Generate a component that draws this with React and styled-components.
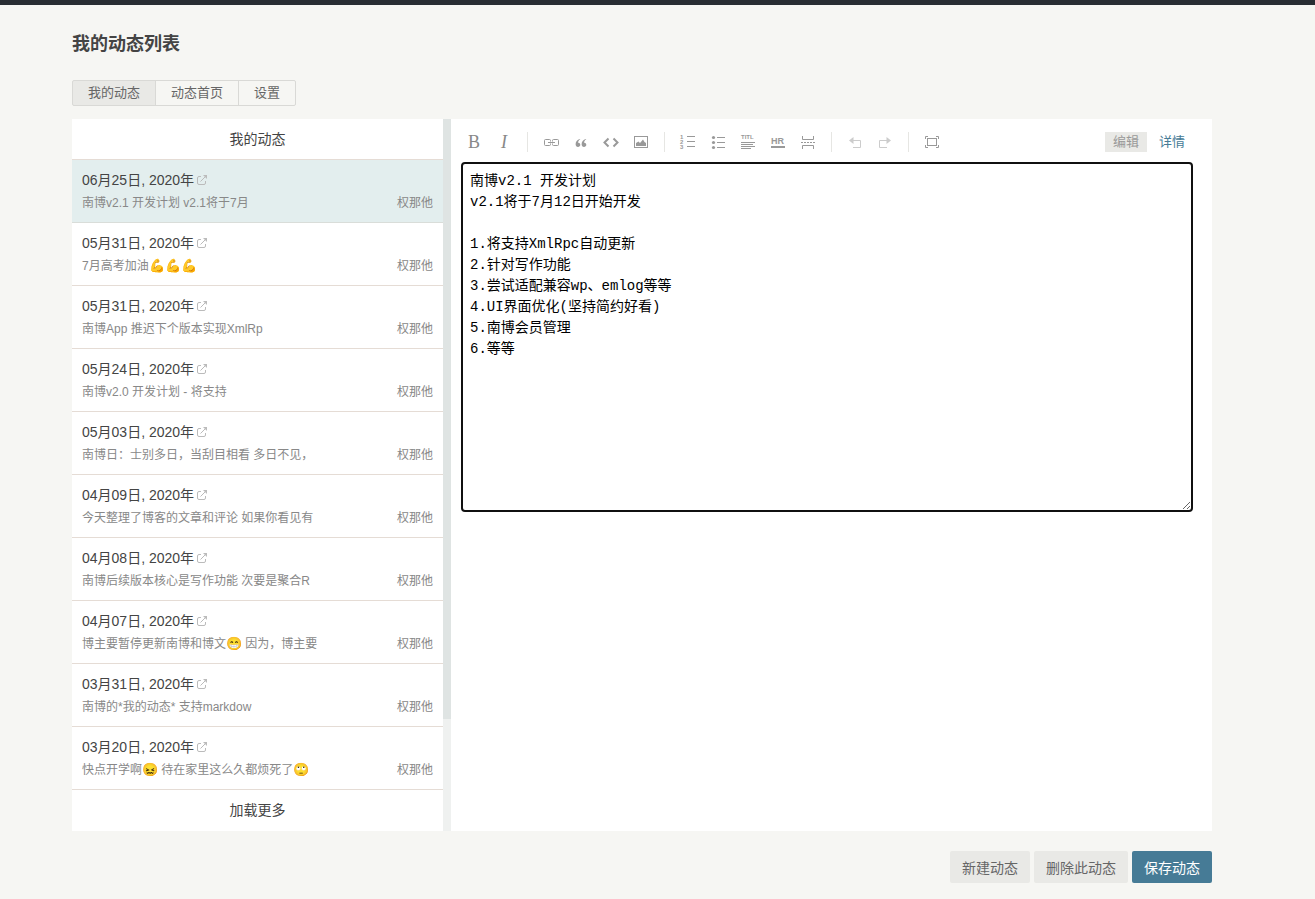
import React, { useState } from "react";
import styled, { createGlobalStyle } from "styled-components";

const GlobalStyle = createGlobalStyle`
  *, *::before, *::after { box-sizing: border-box; }
  body {
    margin: 0;
    background: #f6f6f3;
    color: #444;
    font-family: "Liberation Sans", "Noto Sans CJK SC", sans-serif;
    font-size: 14px;
    line-height: 20px;
  }
  button, textarea { font: inherit; margin: 0; }
  button { cursor: pointer; }
`;

const TopBar = styled.div`
  height: 5px;
  background: #292d33;
`;

const Page = styled.main`
  padding: 27px 103px 16px 72px;
`;

const Title = styled.h2`
  margin: 0 0 24px;
  font-size: 18px;
  line-height: 24px;
  font-weight: 700;
`;

const TabList = styled.nav`
  display: flex;
  margin-bottom: 13px;
`;

const TabLink = styled.a`
  height: 26px;
  padding: 0 15px;
  border: 1px solid #d9d9d6;
  background: ${(p) => (p.$active ? "#e9e9e6" : "transparent")};
  color: #666;
  font-size: 13px;
  line-height: 24px;
  text-decoration: none;
  & + & { margin-left: -1px; }
  &:first-child { border-radius: 2px 0 0 2px; }
  &:last-child { border-radius: 0 2px 2px 0; }
`;

const Board = styled.section`
  display: grid;
  grid-template-columns: 379px 1fr;
  background: #fff;
`;

const Sidebar = styled.div`
  display: flex;
`;

const ListColumn = styled.div`
  flex: 1;
  min-width: 0;
`;

const ListHeading = styled.h3`
  margin: 0;
  padding: 10px;
  border-bottom: 1px solid #e5dcd5;
  font-size: 14px;
  font-weight: 400;
  text-align: center;
`;

const List = styled.ul`
  list-style: none;
  margin: 0;
  padding: 0;
`;

const Item = styled.li`
  padding: 10px 10px 8px;
  border-bottom: 1px solid ${(p) => (p.$active ? "#d9ddd9" : "#e5dcd5")};
  background: ${(p) => (p.$active ? "#e3eeee" : "#fff")};
`;

const ItemHead = styled.div`
  display: flex;
  align-items: center;
  gap: 3px;
  margin-bottom: 2px;
  line-height: 20px;
`;

const ItemLink = styled.a`
  display: flex;
  color: #bbb;
`;

const ItemBody = styled.div`
  display: flex;
  justify-content: space-between;
  height: 22px;
  color: #888;
  font-size: 12px;
  line-height: 22px;
  white-space: nowrap;
`;

const Emoji = styled.span`
  font-size: 13px;
  line-height: 1;
`;

const MoreButton = styled.button`
  display: block;
  width: 100%;
  padding: 10px;
  border: 0;
  background: none;
  color: #444;
  line-height: 21px;
`;

const ScrollTrack = styled.div`
  width: 8px;
  background: #eff1f0;
`;

const ScrollThumb = styled.div`
  height: calc(100% - 112px);
  background: #dfe4e3;
`;

const Editor = styled.div`
  padding: 13px 19px 13px 10px;
`;

const ToolRow = styled.div`
  display: flex;
  justify-content: space-between;
  margin-bottom: 10px;
`;

const Tools = styled.div`
  display: flex;
  padding-left: 3px;
`;

const ToolGroup = styled.div`
  display: flex;
  gap: 10px;
  & + & {
    margin-left: 13px;
    padding-left: 13px;
    border-left: 1px solid #e6e6e3;
  }
`;

const ToolButton = styled.button`
  width: 20px;
  height: 20px;
  padding: 0;
  border: 0;
  background: none;
  color: ${(p) => (p.$muted ? "#ccc" : "#999")};
  svg { display: block; }
`;

const LetterButton = styled(ToolButton)`
  color: #888;
  font: ${(p) => (p.$italic ? "italic 400" : "400")} 18px/20px "Liberation Serif", serif;
`;

const Modes = styled.div`
  display: flex;
  gap: 4px;
`;

const ModeButton = styled.button`
  height: 20px;
  padding: 0 8px;
  border: 0;
  background: ${(p) => (p.$active ? "#e9e9e6" : "transparent")};
  color: ${(p) => (p.$active ? "#999" : "#467b96")};
  font-size: 13px;
  line-height: 20px;
`;

const TextBox = styled.textarea`
  display: block;
  width: 100%;
  height: 350px;
  padding: 7px;
  border: 2px solid #101010;
  border-radius: 4px;
  outline: 0;
  background: #fff;
  color: #000;
  font-family: "Liberation Mono", "Noto Sans CJK SC", monospace;
  font-size: 14px;
  line-height: 21px;
  resize: vertical;
`;

const Actions = styled.div`
  display: flex;
  justify-content: flex-end;
  gap: 4px;
  margin-top: 20px;
`;

const ActionButton = styled.button`
  height: 32px;
  padding: 2px 12px 0;
  border: 0;
  border-radius: 2px;
  background: ${(p) => (p.$primary ? "#467b96" : "#e9e9e6")};
  color: ${(p) => (p.$primary ? "#fff" : "#666")};
  line-height: 30px;
`;

const TinyText = styled.text`
  font-family: "Liberation Sans", sans-serif;
  font-size: ${(p) => p.$size}px;
  font-weight: 700;
  fill: currentColor;
`;

const Icon = ({ children }) => (
  <svg width="20" height="20" viewBox="0 0 20 20" fill="none" stroke="currentColor" aria-hidden="true">
    {children}
  </svg>
);

const ExternalIcon = () => (
  <svg width="10" height="10" viewBox="0 0 10 10" fill="none" stroke="currentColor" aria-hidden="true">
    <path d="M4 1.5H2Q.5 1.5 .5 3V8Q.5 9.5 2 9.5H7Q8.5 9.5 8.5 8V6M3.5 6.5L8.5 1.5" />
    <path d="M6 0H10V4Z" fill="currentColor" stroke="none" />
  </svg>
);

const icons = {
  link: <path d="M9.5 8.5Q9.5 7.5 8.5 7.5H4.5Q3.5 7.5 3.5 8.5V12.5Q3.5 13.5 4.5 13.5H8.5Q9.5 13.5 9.5 12.5M11.5 8.5Q11.5 7.5 12.5 7.5H16.5Q17.5 7.5 17.5 8.5V12.5Q17.5 13.5 16.5 13.5H12.5Q11.5 13.5 11.5 12.5M7 10.5H14M9.5 8.5V9.5M11.5 8.5V9.5M9.5 12.5V11.5M11.5 12.5V11.5" />,
  quote: (
    <g fill="currentColor" stroke="none">
      <path d="M9 7C6 7.8 4.6 9.7 4.6 12.2C4.6 13.8 5.6 15 7 15C8.3 15 9.3 14.1 9.3 12.8C9.3 11.6 8.4 10.8 7.2 10.8C7 9.5 7.7 8.3 9.2 7.6Z" />
      <path d="M15 7C12 7.8 10.6 9.7 10.6 12.2C10.6 13.8 11.6 15 13 15C14.3 15 15.3 14.1 15.3 12.8C15.3 11.6 14.4 10.8 13.2 10.8C13 9.5 13.7 8.3 15.2 7.6Z" />
    </g>
  ),
  code: <path strokeWidth="2" d="M7.5 6.5L3.5 10.5L7.5 14.5M12.5 6.5L16.5 10.5L12.5 14.5" />,
  image: (
    <>
      <rect x="3.5" y="4.5" width="13" height="11" />
      <path d="M5 14V11L7.5 9.5L9 11L12 7.5L13.5 10L15 11V14Z" fill="currentColor" stroke="none" />
    </>
  ),
  ol: (
    <>
      <path d="M9 4.5H17M9 9.5H17M9 14.5H17" />
      <g stroke="none">
        <TinyText $size={6} x="2" y="7">1</TinyText>
        <TinyText $size={6} x="2" y="12">2</TinyText>
        <TinyText $size={6} x="2" y="17">3</TinyText>
      </g>
    </>
  ),
  ul: (
    <>
      <path d="M9 5.5H17M9 10.5H17M9 15.5H17" />
      <g fill="currentColor" stroke="none">
        <circle cx="5.5" cy="5.5" r="1.6" />
        <circle cx="5.5" cy="10.5" r="1.6" />
        <circle cx="5.5" cy="15.5" r="1.6" />
      </g>
    </>
  ),
  title: (
    <>
      <TinyText $size={6} x="3" y="7" stroke="none">TITL</TinyText>
      <path d="M3 10.5H17M3 12.5H15M3 14.5H17M3 16.5H13" />
    </>
  ),
  hr: (
    <>
      <TinyText $size={9} x="3" y="12" stroke="none">HR</TinyText>
      <path strokeWidth="2" d="M3 15H17" />
    </>
  ),
  more: (
    <>
      <path d="M4.5 4V7.5H15.5V4M4.5 17V13.5H15.5V17" />
      <path strokeDasharray="2 1" d="M3 10.5H17" />
    </>
  ),
  undo: (
    <>
      <path d="M8 8.5H15.5V15.5H8" />
      <path d="M4 8.5L8.5 5V12Z" fill="currentColor" stroke="none" />
    </>
  ),
  redo: (
    <>
      <path d="M12 8.5H4.5V15.5H12" />
      <path d="M16 8.5L11.5 5V12Z" fill="currentColor" stroke="none" />
    </>
  ),
  fullscreen: (
    <>
      <path d="M3.5 7V4.5H6M14 4.5H16.5V7M16.5 13V15.5H14M6 15.5H3.5V13" />
      <rect x="5.5" y="6.5" width="9" height="7" />
    </>
  ),
};

const toolGroups = [
  [["link", "链接"], ["quote", "引用"], ["code", "代码"], ["image", "图片"]],
  [["ol", "数字列表"], ["ul", "普通列表"], ["title", "标题"], ["hr", "分割线"], ["more", "摘要分割线"]],
  [["undo", "撤销"], ["redo", "重做"]],
  [["fullscreen", "全屏"]],
];

const posts = [
  ["06月25日, 2020年", "南博v2.1 开发计划 v2.1将于7月"],
  ["05月31日, 2020年", "7月高考加油💪💪💪"],
  ["05月31日, 2020年", "南博App 推迟下个版本实现XmlRp"],
  ["05月24日, 2020年", "南博v2.0 开发计划 - 将支持"],
  ["05月03日, 2020年", "南博日：士别多日，当刮目相看 多日不见，"],
  ["04月09日, 2020年", "今天整理了博客的文章和评论 如果你看见有"],
  ["04月08日, 2020年", "南博后续版本核心是写作功能 次要是聚合R"],
  ["04月07日, 2020年", "博主要暂停更新南博和博文😁 因为，博主要"],
  ["03月31日, 2020年", "南博的*我的动态* 支持markdow"],
  ["03月20日, 2020年", "快点开学啊😖 待在家里这么久都烦死了🙄"],
];

const draft = `南博v2.1 开发计划
v2.1将于7月12日开始开发

1.将支持XmlRpc自动更新
2.针对写作功能
3.尝试适配兼容wp、emlog等等
4.UI界面优化(坚持简约好看)
5.南博会员管理
6.等等`;

// Splits a summary so that emoji runs get their own, slightly larger size.
const Summary = ({ text }) => (
  <span>
    {text.split(/([💪😁😖🙄]+)/u).map((part, i) => (i % 2 ? <Emoji key={i}>{part}</Emoji> : part))}
  </span>
);

export default function App() {
  const [text, setText] = useState(draft);
  return (
    <>
      <GlobalStyle />
      <TopBar />
      <Page>
        <Title>我的动态列表</Title>
        <TabList>
          <TabLink href="#mine" $active>我的动态</TabLink>
          <TabLink href="#home">动态首页</TabLink>
          <TabLink href="#settings">设置</TabLink>
        </TabList>
        <Board>
          <Sidebar>
            <ListColumn>
              <ListHeading>我的动态</ListHeading>
              <List>
                {posts.map(([date, summary], i) => (
                  <Item key={i} $active={i === 0}>
                    <ItemHead>
                      <span>{date}</span>
                      <ItemLink href={`#post-${i}`} aria-label="查看">
                        <ExternalIcon />
                      </ItemLink>
                    </ItemHead>
                    <ItemBody>
                      <Summary text={summary} />
                      <span>权那他</span>
                    </ItemBody>
                  </Item>
                ))}
              </List>
              <MoreButton type="button">加载更多</MoreButton>
            </ListColumn>
            <ScrollTrack>
              <ScrollThumb />
            </ScrollTrack>
          </Sidebar>
          <Editor>
            <ToolRow>
              <Tools>
                <ToolGroup>
                  <LetterButton type="button" aria-label="加粗">B</LetterButton>
                  <LetterButton type="button" aria-label="斜体" $italic>I</LetterButton>
                </ToolGroup>
                {toolGroups.map((group, g) => (
                  <ToolGroup key={g}>
                    {group.map(([name, label]) => (
                      <ToolButton key={name} type="button" aria-label={label} $muted={name === "undo" || name === "redo"}>
                        <Icon>{icons[name]}</Icon>
                      </ToolButton>
                    ))}
                  </ToolGroup>
                ))}
              </Tools>
              <Modes>
                <ModeButton type="button" $active>编辑</ModeButton>
                <ModeButton type="button">详情</ModeButton>
              </Modes>
            </ToolRow>
            <TextBox aria-label="动态内容" value={text} onChange={(e) => setText(e.target.value)} />
          </Editor>
        </Board>
        <Actions>
          <ActionButton type="button">新建动态</ActionButton>
          <ActionButton type="button">删除此动态</ActionButton>
          <ActionButton type="button" $primary>保存动态</ActionButton>
        </Actions>
      </Page>
    </>
  );
}
